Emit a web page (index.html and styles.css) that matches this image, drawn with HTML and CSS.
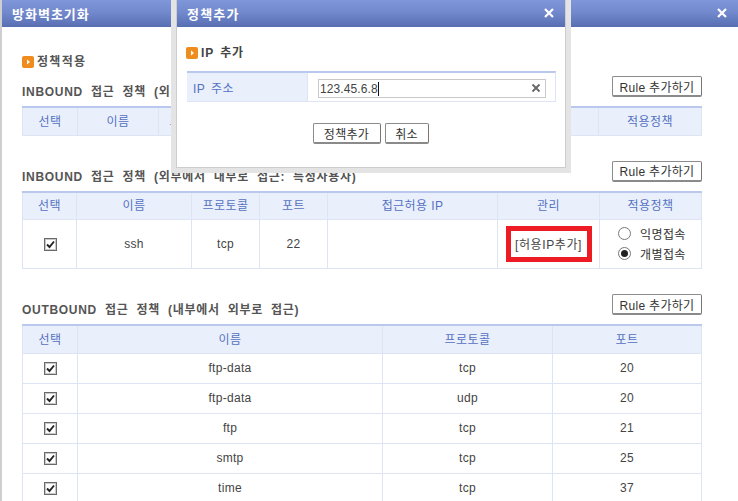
FILE: index.html
```html
<!DOCTYPE html>
<html lang="ko">
<head>
<meta charset="utf-8">
<title>방화벽초기화</title>
<link rel="stylesheet" href="styles.css">
</head>
<body>
<div class="window">
  <header class="bar">
    <span class="bar-title">방화벽초기화</span>
    <svg class="close" viewBox="0 0 10 10"><path d="M1 1L9 9M9 1L1 9"/></svg>
  </header>
  <main class="content">
    <h2 class="sub"><svg class="bullet" viewBox="0 0 12 12"><rect width="12" height="12" rx="2"/><path d="M5 3.5L8 6L5 8.5Z"/></svg>정책적용</h2>

    <section class="sec sec-a">
      <div class="sec-head">
        <h3 class="sec-title">INBOUND 접근 정책 (외부에서 내부로 접근: 전체허용)</h3>
        <button class="btn rule">Rule 추가하기</button>
      </div>
      <table class="grid t1">
        <colgroup><col class="c55"><col class="c81"><col class="c68"><col class="c68"><col class="c170"><col class="c134"><col></colgroup>
        <tr><th>선택</th><th>이름</th><th>프로토콜</th><th>포트</th><th>접근허용 IP</th><th>관리</th><th>적용정책</th></tr>
      </table>
    </section>

    <section class="sec sec-b">
      <div class="sec-head">
        <h3 class="sec-title">INBOUND 접근 정책 (외부에서 내부로 접근: 특정사용자)</h3>
        <button class="btn rule">Rule 추가하기</button>
      </div>
      <table class="grid t2">
        <colgroup><col class="c54"><col class="c115"><col class="c68"><col class="c68"><col class="c170"><col class="c102"><col></colgroup>
        <tr><th>선택</th><th>이름</th><th>프로토콜</th><th>포트</th><th>접근허용 IP</th><th>관리</th><th>적용정책</th></tr>
        <tr class="tall">
          <td><span class="check"><svg viewBox="0 0 11 11"><path d="M2 5.5L4.5 8L9 2.5"/></svg></span></td>
          <td>ssh</td><td>tcp</td><td>22</td><td></td>
          <td><span class="marked">[허용IP추가]</span></td>
          <td class="policy">
            <label class="opt"><span class="radio"></span>익명접속</label>
            <label class="opt"><span class="radio on"></span>개별접속</label>
          </td>
        </tr>
      </table>
    </section>

    <section class="sec sec-c">
      <div class="sec-head">
        <h3 class="sec-title">OUTBOUND 접근 정책 (내부에서 외부로 접근)</h3>
        <button class="btn rule">Rule 추가하기</button>
      </div>
      <table class="grid t3">
        <colgroup><col class="c55"><col class="c305"><col class="c170"><col></colgroup>
        <tr><th>선택</th><th>이름</th><th>프로토콜</th><th>포트</th></tr>
        <tr><td><span class="check"><svg viewBox="0 0 11 11"><path d="M2 5.5L4.5 8L9 2.5"/></svg></span></td><td>ftp-data</td><td>tcp</td><td>20</td></tr>
        <tr><td><span class="check"><svg viewBox="0 0 11 11"><path d="M2 5.5L4.5 8L9 2.5"/></svg></span></td><td>ftp-data</td><td>udp</td><td>20</td></tr>
        <tr><td><span class="check"><svg viewBox="0 0 11 11"><path d="M2 5.5L4.5 8L9 2.5"/></svg></span></td><td>ftp</td><td>tcp</td><td>21</td></tr>
        <tr><td><span class="check"><svg viewBox="0 0 11 11"><path d="M2 5.5L4.5 8L9 2.5"/></svg></span></td><td>smtp</td><td>tcp</td><td>25</td></tr>
        <tr><td><span class="check"><svg viewBox="0 0 11 11"><path d="M2 5.5L4.5 8L9 2.5"/></svg></span></td><td>time</td><td>tcp</td><td>37</td></tr>
      </table>
    </section>
  </main>
</div>

<div class="modal">
  <div class="modal-inner">
    <header class="bar">
      <span class="bar-title modal-title">정책추가</span>
      <svg class="close" viewBox="0 0 10 10"><path d="M1 1L9 9M9 1L1 9"/></svg>
    </header>
    <div class="modal-body">
      <h2 class="sub modal-sub"><svg class="bullet" viewBox="0 0 12 12"><rect width="12" height="12" rx="2"/><path d="M5 3.5L8 6L5 8.5Z"/></svg>IP 추가</h2>
      <div class="form-row">
        <div class="form-label">IP 주소</div>
        <div class="form-field">
          <div class="input"><span class="input-val">123.45.6.8</span><span class="caret"></span>
            <svg class="clear" viewBox="0 0 10 10"><path d="M1.5 1.5L8.5 8.5M8.5 1.5L1.5 8.5"/></svg>
          </div>
        </div>
      </div>
      <div class="actions">
        <button class="btn">정책추가</button>
        <button class="btn">취소</button>
      </div>
    </div>
  </div>
</div>
</body>
</html>
```
FILE: styles.css
```css
* { box-sizing: border-box; }
html, body { margin: 0; padding: 0; height: 501px; overflow: hidden; background: #fff; }
body {
  font-family: "Liberation Sans", "Noto Sans CJK KR", sans-serif;
  font-size: 12px;
  color: #444;
  position: relative;
}
.window { border-left: 2px solid #cfcfcf; height: 501px; overflow: hidden; }
.bar {
  height: 27px;
  display: flex;
  align-items: center;
  justify-content: space-between;
  padding: 0 11px 1px 10px;
  background: linear-gradient(#7f97da, #7389cd 45%, #586eb2);
}
.bar-title { color: #fff; font-size: 13px; font-weight: 700; letter-spacing: 1px; }
.close { width: 10px; height: 10px; fill: none; stroke: #fff; stroke-width: 2.2; }
.content { padding: 27px 36px 0 20px; }
.sub { margin: 0; font-size: 12px; font-weight: 700; line-height: 16px; height: 16px; color: #555; display: flex; align-items: center; letter-spacing: 1.3px; }
.bullet { width: 12px; height: 12px; margin-right: 3px; }
.bullet rect { fill: #f08c1e; }
.bullet path { fill: #fff; }
.sec-a { margin-top: 6px; }
.sec-b { margin-top: 25px; }
.sec-c { margin-top: 25px; }
.sec-head { display: flex; justify-content: space-between; align-items: flex-end; height: 23px; margin-bottom: 7px; }
.sec-title { margin: 0; font-size: 12px; font-weight: 700; line-height: 16px; color: #555; letter-spacing: 0.7px; word-spacing: 4px; position: relative; top: 1px; }
.btn {
  height: 21px;
  padding: 0;
  background: #fff;
  border: 1px solid #8c8c8c;
  border-right-color: #777;
  border-bottom: 2px solid #8a8a8a;
  border-radius: 2px;
  font: 12px "Liberation Sans", "Noto Sans CJK KR", sans-serif;
  color: #333;
  letter-spacing: 0.3px;
}
.rule { width: 90px; margin-bottom: 2px; }
.grid { width: 680px; table-layout: fixed; border-collapse: collapse; border-top: 2px solid #b9c8ec; }
.grid th, .grid td { border: 1px solid #dde4f4; padding: 0; text-align: center; font-weight: 400; }
.grid th { height: 28px; padding-bottom: 2px; background: #e9f0fb; color: #5570c2; letter-spacing: 0.4px; }
.grid td { height: 30px; color: #444; letter-spacing: 0.3px; padding-bottom: 1px; }
.grid .tall td { height: 49px; }
.c54 { width: 54px; } .c55 { width: 55px; } .c81 { width: 81px; } .c68 { width: 68px; }
.c115 { width: 115px; } .c170 { width: 170px; } .c134 { width: 134px; } .c102 { width: 102px; } .c305 { width: 305px; }
.check { display: inline-flex; width: 13px; height: 13px; margin-left: 1px; border: 1px solid #6a6a6a; box-shadow: inset 0 0 0 1px #c8c8c8; background: #fff; vertical-align: middle; }
.check svg { width: 11px; height: 11px; fill: none; stroke: #222; stroke-width: 1.9; }
.marked { display: inline-flex; align-items: center; justify-content: center; width: 86px; height: 36px; border: 5px solid #ed1c24; white-space: nowrap; letter-spacing: 0.6px; }
.policy { text-align: left; }
.opt { display: flex; align-items: center; height: 20px; padding-left: 18px; color: #333; letter-spacing: 0.4px; }
.radio { width: 13px; height: 13px; border: 1px solid #777; border-radius: 50%; margin-right: 9px; display: flex; align-items: center; justify-content: center; background: #fff; }
.radio.on::after { content: ""; width: 7px; height: 7px; border-radius: 50%; background: #222; }

.modal { position: absolute; left: 171px; top: -5px; width: 400px; height: 178px; border: 5px solid #e4e4e4; background: #fff; }
.modal-inner { height: 100%; border: 1px solid #cdcdcd; border-top: 0; }
.modal .bar-title { letter-spacing: 1.2px; }
.modal-body { padding: 18px 9px 0 10px; }
.modal-sub { letter-spacing: 0.9px; word-spacing: 2px; color: #444; margin-left: -1px; }
.form-row { display: flex; height: 31px; margin-top: 10px; border-top: 2px solid #b9c8ec; border-bottom: 1px solid #dde4f4; border-right: 1px solid #dde4f4; }
.form-label { width: 121px; background: #e9f0fb; color: #5570c2; display: flex; align-items: center; padding-left: 6px; letter-spacing: 0.5px; word-spacing: 2px; border-right: 1px solid #dde4f4; }
.form-field { flex: 1; padding: 6px 9px 0 10px; }
.input { height: 19px; border: 1px solid #c9c9c9; display: flex; align-items: center; padding-left: 1px; position: relative; color: #444; font-size: 12px; letter-spacing: 0.1px; }
.caret { width: 1px; height: 14px; background: #111; }
.clear { position: absolute; right: 4px; top: 3px; width: 10px; height: 10px; fill: none; stroke: #666; stroke-width: 1.8; }
.actions { display: flex; justify-content: center; gap: 4px; margin-top: 21px; padding-right: 2px; }
.actions .btn:first-child { width: 68px; }
.actions .btn:last-child { width: 44px; }
```
